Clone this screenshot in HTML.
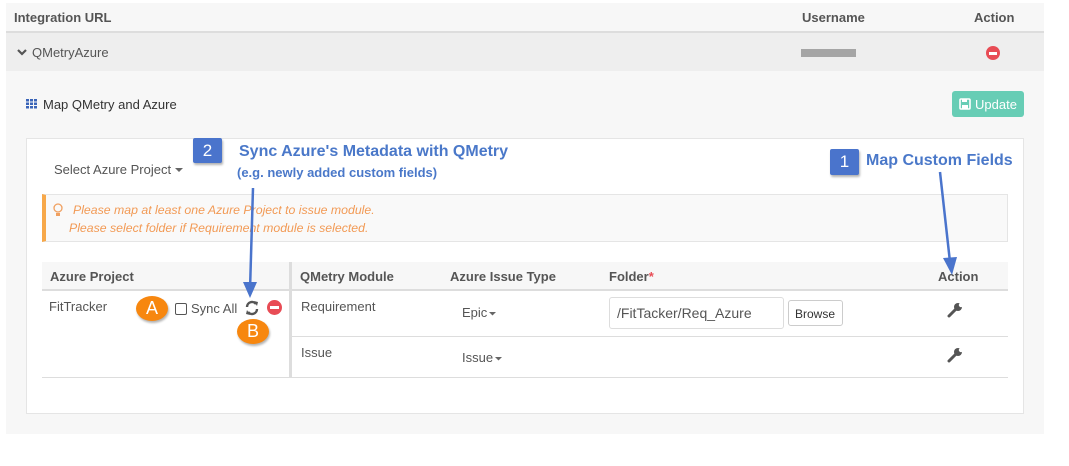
<!DOCTYPE html>
<html><head><meta charset="utf-8"><style>
*{box-sizing:border-box;margin:0;padding:0}
body{width:1069px;height:466px;background:#fff;font-family:"Liberation Sans",sans-serif;position:relative;overflow:hidden;color:#555}
.a{position:absolute}
.hdr{font-weight:bold;font-size:13px;color:#555}
.t{font-size:13px;color:#555}
.ann{color:#4a78c9;font-weight:bold}
.badge{background:#4a74cc;color:#fff;font-size:17px;text-align:center;border-radius:2px;box-shadow:1px 2px 2px rgba(0,0,0,.3)}
.orb{background:#f7870f;color:#fff;font-size:18px;text-align:center;border-radius:50%;box-shadow:1px 2px 2px rgba(0,0,0,.3)}
</style></head><body>
<div class="a" style="left:6px;top:3px;width:1038px;height:431px;background:#f7f7f7"></div>
<div class="a" style="left:6px;top:31px;width:1038px;height:2px;background:#ddd"></div>
<div class="a" style="left:6px;top:33px;width:1038px;height:38px;background:#eeeeee"></div>
<div class="a hdr" style="left:14px;top:10px">Integration URL</div>
<div class="a hdr" style="left:802px;top:10px">Username</div>
<div class="a hdr" style="left:974px;top:10px">Action</div>
<svg class="a" style="left:16px;top:47px" width="12" height="10"><path d="M2 3l4 4 4-4" stroke="#555" stroke-width="2.2" fill="none"/></svg>
<div class="a t" style="left:32px;top:45px">QMetryAzure</div>
<div class="a" style="left:801px;top:49px;width:55px;height:8px;background:#a5a5a5"></div>
<div class="a" style="left:986px;top:46px;width:14px;height:14px;border-radius:50%;background:#e84c55"></div>
<div class="a" style="left:989px;top:52px;width:8px;height:2.5px;background:#fff"></div>
<svg class="a" style="left:26px;top:99px" width="12" height="10"><g fill="#3a64b8"><rect x="0" y="0" width="3" height="2.5"/><rect x="4" y="0" width="3" height="2.5"/><rect x="8" y="0" width="3" height="2.5"/><rect x="0" y="3.5" width="3" height="2.5"/><rect x="4" y="3.5" width="3" height="2.5"/><rect x="8" y="3.5" width="3" height="2.5"/><rect x="0" y="7" width="3" height="2.5"/><rect x="4" y="7" width="3" height="2.5"/><rect x="8" y="7" width="3" height="2.5"/></g></svg>
<div class="a" style="left:43px;top:97px;font-size:13px;color:#333">Map QMetry and Azure</div>
<div class="a" style="left:952px;top:91px;width:72px;height:26px;background:#67cdb5;border-radius:3px;color:#fff;font-size:13px;padding:6px 0 0 23px">Update</div>
<svg class="a" style="left:959px;top:98px" width="12" height="12"><rect x="1" y="1" width="10" height="10" rx="1" fill="none" stroke="#fff" stroke-width="1.6"/><rect x="3" y="1" width="5" height="3" fill="#fff"/><rect x="3" y="7" width="6" height="4" fill="#fff"/></svg>
<div class="a" style="left:26px;top:138px;width:998px;height:276px;background:#fff;border:1px solid #e5e5e5"></div>
<div class="a t" style="left:54px;top:162px">Select Azure Project</div>
<svg class="a" style="left:175px;top:168px" width="9" height="5"><path d="M0 0h8l-4 4z" fill="#666"/></svg>
<div class="a" style="left:42px;top:194px;width:966px;height:48px;background:#f9f9f9;border:1px solid #e5e5e5;border-left:4px solid #f7a84a"></div>
<svg class="a" style="left:53px;top:203px" width="10" height="14"><circle cx="5" cy="5" r="4" fill="none" stroke="#f0a060" stroke-width="1.3"/><rect x="3" y="10" width="4" height="3" fill="#f0a060"/></svg>
<div class="a" style="left:73px;top:203px;font-size:12.3px;font-style:italic;color:#f29a55">Please map at least one Azure Project to issue module.</div>
<div class="a" style="left:69px;top:221px;font-size:12.3px;font-style:italic;color:#f29a55">Please select folder if Requirement module is selected.</div>
<div class="a" style="left:42px;top:262px;width:966px;height:29px;background:#f7f7f7;border-bottom:2px solid #ddd"></div>
<div class="a" style="left:289px;top:262px;width:3px;height:116px;background:#ddd"></div>
<div class="a" style="left:292px;top:336px;width:716px;height:1px;background:#ddd"></div>
<div class="a" style="left:42px;top:377px;width:966px;height:1px;background:#ddd"></div>
<div class="a hdr" style="left:50px;top:269px">Azure Project</div>
<div class="a hdr" style="left:300px;top:269px">QMetry Module</div>
<div class="a hdr" style="left:450px;top:269px">Azure Issue Type</div>
<div class="a hdr" style="left:609px;top:269px">Folder<span style="color:#e84c55">*</span></div>
<div class="a hdr" style="left:938px;top:269px">Action</div>
<div class="a t" style="left:49px;top:299px">FitTracker</div>
<div class="a" style="left:175px;top:303px;width:12px;height:12px;border:1px solid #555;border-radius:2px;background:#fff"></div>
<div class="a t" style="left:191px;top:301px">Sync All</div>
<svg class="a" style="left:244px;top:300px" width="16" height="16"><path d="M3 7a5 5 0 0 1 9-3" stroke="#555" stroke-width="2.4" fill="none"/><path d="M10 1l4 1-1 4z" fill="#555"/><path d="M13 9a5 5 0 0 1-9 3" stroke="#555" stroke-width="2.4" fill="none"/><path d="M6 15l-4-1 1-4z" fill="#555"/></svg>
<div class="a" style="left:267px;top:300px;width:15px;height:15px;border-radius:50%;background:#e84c55"></div>
<div class="a" style="left:270px;top:306px;width:9px;height:3px;background:#fff"></div>
<div class="a orb" style="left:136px;top:296px;width:32px;height:25px;line-height:25px">A</div>
<div class="a orb" style="left:237px;top:319px;width:32px;height:25px;line-height:25px">B</div>
<div class="a t" style="left:301px;top:299px">Requirement</div>
<div class="a t" style="left:301px;top:345px">Issue</div>
<div class="a t" style="left:462px;top:305px">Epic</div>
<svg class="a" style="left:489px;top:312px" width="8" height="5"><path d="M0 0h7l-3.5 3.5z" fill="#666"/></svg>
<div class="a t" style="left:462px;top:350px">Issue</div>
<svg class="a" style="left:495px;top:357px" width="8" height="5"><path d="M0 0h7l-3.5 3.5z" fill="#666"/></svg>
<div class="a" style="left:609px;top:297px;width:175px;height:32px;border:1px solid #ddd;border-radius:3px;font-size:14px;color:#555;padding:7px 0 0 7px">/FitTacker/Req_Azure</div>
<div class="a" style="left:788px;top:300px;width:55px;height:26px;border:1px solid #ccc;border-radius:3px;font-size:12px;color:#333;padding:6px 0 0 6px">Browse</div>
<svg class="a" style="left:947px;top:301px" width="18" height="18"><path d="M2 15l7-7" stroke="#555" stroke-width="3" stroke-linecap="round"/><circle cx="11" cy="6" r="4" fill="#555"/><circle cx="14" cy="4" r="2.2" fill="#fff"/></svg>
<svg class="a" style="left:947px;top:346px" width="18" height="18"><path d="M2 15l7-7" stroke="#555" stroke-width="3" stroke-linecap="round"/><circle cx="11" cy="6" r="4" fill="#555"/><circle cx="14" cy="4" r="2.2" fill="#fff"/></svg>
<div class="a badge" style="left:193px;top:138px;width:29px;height:25px;line-height:25px">2</div>
<div class="a ann" style="left:239px;top:143px;font-size:16px">Sync Azure's Metadata with QMetry</div>
<div class="a ann" style="left:237px;top:165px;font-size:13px">(e.g. newly added custom fields)</div>
<div class="a badge" style="left:830px;top:149px;width:29px;height:26px;line-height:26px">1</div>
<div class="a ann" style="left:866px;top:152px;font-size:16px">Map Custom Fields</div>
<svg class="a" style="left:0;top:0" width="1069" height="466"><g stroke="#4a74cc" stroke-width="2.5" fill="#4a74cc"><line x1="253" y1="188" x2="250" y2="290"/><path d="M243 282l7 16 7-16z" stroke="none"/><line x1="940" y1="172" x2="950" y2="262"/><path d="M943 258l9 17 5-18z" stroke="none"/></g></svg>
</body></html>
